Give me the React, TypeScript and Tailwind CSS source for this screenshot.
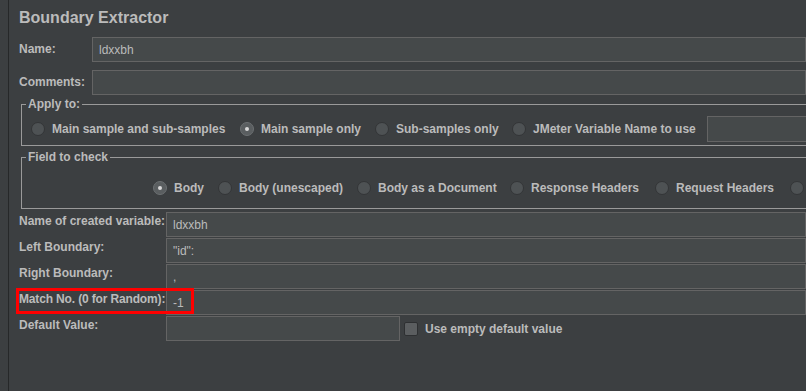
import type { ReactNode } from 'react'

function Field({ value = '', className = '' }: { value?: string; className?: string }) {
  return (
    <div
      className={`h-[25px] bg-[#45494a] border border-[#646464] flex items-center px-[6px] text-[12px] font-normal whitespace-nowrap ${className}`}
    >
      {value}
    </div>
  )
}

function Radio({ checked = false }: { checked?: boolean }) {
  return (
    <div
      className={`w-[14px] h-[14px] rounded-full shrink-0 flex items-center justify-center border ${
        checked ? 'bg-[#5a5e60] border-[#6c7072]' : 'bg-[#4e5254] border-[#333537]'
      }`}
    >
      {checked && <div className="w-[4px] h-[4px] rounded-full bg-[#d8d8d8]" />}
    </div>
  )
}

function RadioItem({ label, checked, width }: { label: string; checked?: boolean; width: string }) {
  return (
    <div className={`flex items-center gap-[7px] shrink-0 ${width}`}>
      <Radio checked={checked} />
      <span className="whitespace-nowrap">{label}</span>
    </div>
  )
}

function Group({ title, className, children }: { title: string; className: string; children: ReactNode }) {
  return (
    <div className={`relative ml-[2px] w-[900px] border border-[#9a9a9a] ${className}`}>
      <span className="absolute left-[4px] -top-[8px] px-[2px] bg-[#3c3f41] leading-[14px]">{title}</span>
      {children}
    </div>
  )
}

function Row({ label, value, labelClass = '' }: { label: string; value: string; labelClass?: string }) {
  return (
    <div className="flex h-[25px] mt-[1px]">
      <div className={`w-[147px] shrink-0 pt-[2px] leading-[14px] whitespace-nowrap ${labelClass}`}>{label}</div>
      <Field value={value} className="w-[700px]" />
    </div>
  )
}

export default function App() {
  return (
    <div className="relative w-[806px] h-[391px] overflow-hidden bg-[#3c3f41] flex font-['Liberation_Sans',Arial,sans-serif] text-[#bbbbbb] text-[12px] font-bold">
      <div className="w-[8px] shrink-0" />
      <div className="w-px shrink-0 bg-[#262829]" />
      <div className="flex-1 min-w-0 pl-[10px]">
        <div className="h-[37px] pt-[9px] text-[16px] leading-[18px]">Boundary Extractor</div>

        <div className="flex h-[25px]">
          <div className="w-[73px] shrink-0 pt-[5px] leading-[14px]">Name:</div>
          <Field value="ldxxbh" className="w-[800px]" />
        </div>
        <div className="flex h-[25px] mt-[8px]">
          <div className="w-[73px] shrink-0 pt-[5px] leading-[14px]">Comments:</div>
          <Field className="w-[800px]" />
        </div>

        {/* Apply to */}
        <Group title="Apply to:" className="mt-[9px] h-[42px]">
          <div className="flex items-center h-full pt-[7px] pl-[9px] leading-[14px]">
            <RadioItem label="Main sample and sub-samples" width="w-[209px]" />
            <RadioItem label="Main sample only" checked width="w-[135px]" />
            <RadioItem label="Sub-samples only" width="w-[137px]" />
            <RadioItem label="JMeter Variable Name to use" width="w-[195px]" />
            <Field className="w-[150px] h-[26px]" />
          </div>
        </Group>

        {/* Field to check */}
        <Group title="Field to check" className="mt-[11px] h-[52px]">
          <div className="flex items-center h-full pt-[9px] pl-[131px] leading-[14px]">
            <RadioItem label="Body" checked width="w-[65px]" />
            <RadioItem label="Body (unescaped)" width="w-[139px]" />
            <RadioItem label="Body as a Document" width="w-[153px]" />
            <RadioItem label="Response Headers" width="w-[145px]" />
            <RadioItem label="Request Headers" width="w-[135px]" />
            <Radio />
          </div>
        </Group>

        <div className="mt-[3px]">
          <Row label="Name of created variable:" value="ldxxbh" />
          <Row label="Left Boundary:" value={'"id":'} />
          <Row label="Right Boundary:" value="," />
          <Row label="Match No. (0 for Random):" value="-1" labelClass="tracking-[-0.15px]" />
          <div className="flex h-[25px] mt-[1px]">
            <div className="w-[147px] shrink-0 pt-[2px] leading-[14px]">Default Value:</div>
            <Field className="w-[234px]" />
            <div className="flex items-center ml-[4px] gap-[7px]">
              <div className="w-[14px] h-[14px] rounded-[2px] bg-[#5b5e60] border border-[#2e3032]" />
              <span className="whitespace-nowrap">Use empty default value</span>
            </div>
          </div>
        </div>
      </div>

      {/* highlight annotation */}
      <div className="absolute left-[16px] top-[288px] w-[178px] h-[26px] border-[3px] border-[#ff0000]" />
    </div>
  )
}
